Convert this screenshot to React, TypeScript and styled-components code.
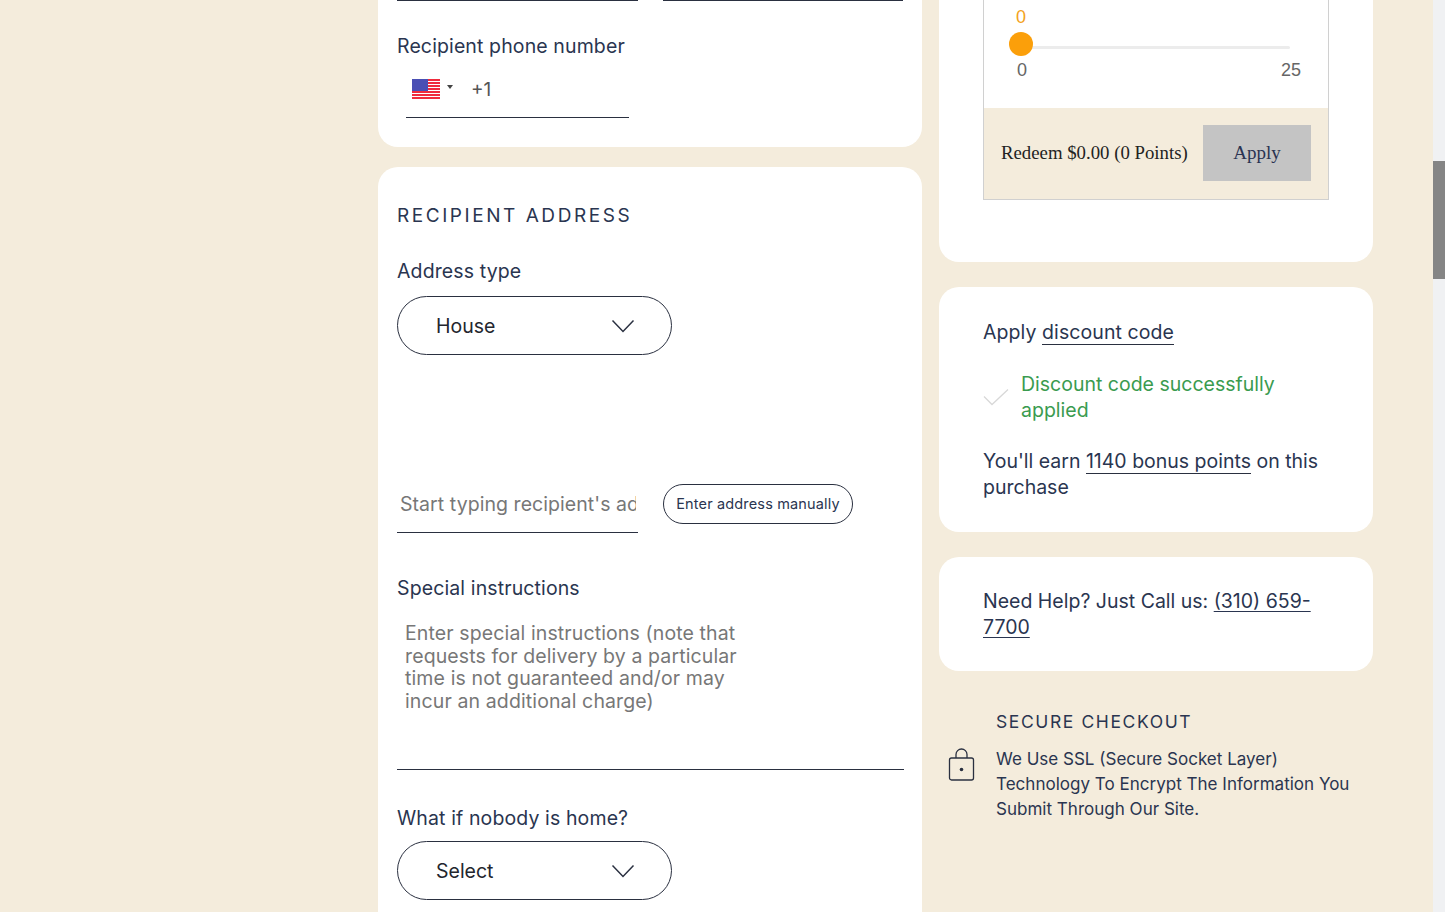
import React from 'react';
import styled, { createGlobalStyle } from 'styled-components';

const Global = createGlobalStyle`
  html, body { margin: 0; padding: 0; height: 912px; overflow: hidden; background: #f4ecdc; }
  * { box-sizing: border-box; }
  body { font-family: Inter, "Liberation Sans", sans-serif; color: #2a3550; }
`;

const Page = styled.div`
  display: flex;
  width: 1445px;
  height: 912px;
  overflow: hidden;
  background: #f4ecdc;
`;
const Content = styled.div`
  flex: 1;
  display: flex;
  align-items: flex-start;
  padding-left: 378px;
`;
const ScrollTrack = styled.div`
  width: 12px;
  height: 912px;
  background: #f0f1f3;
  padding-top: 161px;
`;
const ScrollThumb = styled.div`
  height: 118px;
  background: #858585;
`;
const LeftCol = styled.div`
  width: 544px;
  display: flex;
  flex-direction: column;
  gap: 20px;
`;
const RightCol = styled.div`
  width: 434px;
  margin-left: 17px;
  display: flex;
  flex-direction: column;
`;
const Card = styled.section<{ $open?: 'top' | 'bottom' }>`
  background: #fff;
  border-radius: ${p => (p.$open === 'top' ? '0 0 20px 20px' : p.$open === 'bottom' ? '20px 20px 0 0' : '20px')};
`;
const PhoneCard = styled(Card)`
  height: 147px;
  padding: 0 19px;
`;
const TopFields = styled.div`
  display: flex;
  gap: 25px;
`;
const TopLine = styled.div`
  width: 241px;
  height: 1px;
  background: #2a3040;
`;
const Label = styled.div`
  font-size: 19.5px;
  line-height: 26px;
  letter-spacing: 0.12px;
`;
const PhoneLabel = styled(Label)`
  margin-top: 32px;
`;
const PhoneField = styled.div`
  margin: 11px 0 0 9px;
  width: 223px;
  height: 48px;
  border-bottom: 1px solid #2a3040;
  display: flex;
  align-items: flex-start;
  padding: 9px 0 0 6px;
`;
const Caret = styled.span`
  width: 0;
  height: 0;
  margin: 6px 0 0 7px;
  border-left: 3px solid transparent;
  border-right: 3px solid transparent;
  border-top: 4px solid #444;
`;
const Dial = styled.span`
  margin: -1px 0 0 18px;
  font-size: 19px;
  line-height: 24px;
  color: #555;
`;
const AddressCard = styled(Card)`
  height: 760px;
  padding: 37px 19px 0;
`;
const Heading = styled.h2`
  margin: 0;
  font-size: 19px;
  line-height: 24px;
  font-weight: 400;
  letter-spacing: 2.55px;
`;
const TypeLabel = styled(Label)`
  margin-top: 30px;
`;
const Select = styled.div<{ $gap: number }>`
  width: 275px;
  height: 59px;
  border: 1px solid #2a3040;
  border-radius: 30px;
  margin-top: ${p => p.$gap}px;
  padding: 0 36px 0 38px;
  display: flex;
  align-items: center;
  justify-content: space-between;
  font-size: 19.5px;
  color: #23262e;
`;
const AddressRow = styled.div`
  display: flex;
  margin-top: 129px;
  gap: 25px;
  align-items: flex-start;
`;
const AddressInput = styled.div`
  width: 241px;
  height: 49px;
  padding: 8px 2px 0 3px;
  border-bottom: 1px solid #2a3040;
`;
const Placeholder = styled.div`
  width: 236px;
  font-size: 19.5px;
  line-height: 24px;
  color: #777;
  white-space: nowrap;
  overflow: hidden;
  letter-spacing: 0.06px;
`;
const Manual = styled.button`
  width: 190px;
  height: 40px;
  border: 1px solid #2a3040;
  border-radius: 20px;
  background: #fff;
  font: 400 14.5px Inter, sans-serif;
  letter-spacing: 0.15px;
  color: #2a3550;
  padding: 0 0 2px;
`;
const InstrLabel = styled(Label)`
  margin-top: 42px;
`;
const Textarea = styled.div`
  width: 507px;
  height: 159px;
  margin-top: 10px;
  padding: 11px 9px 0 8px;
  border-bottom: 1px solid #2a3040;
  font-size: 19.5px;
  line-height: 22.5px;
  color: #777;
  letter-spacing: 0.12px;
`;
const TextareaText = styled.div`
  width: 350px;
`;
const NobodyLabel = styled(Label)`
  margin-top: 35px;
`;
const RedeemCard = styled(Card)`
  height: 262px;
  padding: 0 44px;
`;
const RedeemBox = styled.div`
  width: 346px;
  height: 200px;
  border: 1px solid #d0d0d0;
  border-top: 0;
  display: flex;
  flex-direction: column;
`;
const SliderArea = styled.div`
  position: relative;
  height: 108px;
  font-family: "Liberation Sans", Arial, sans-serif;
  font-size: 18px;
`;
const SliderValue = styled.div`
  position: absolute;
  left: 32px;
  top: 7px;
  line-height: 20px;
  color: #f3a21c;
`;
const SliderTrack = styled.div`
  position: absolute;
  left: 26px;
  top: 46px;
  width: 280px;
  height: 3px;
  background: #ececec;
  border-radius: 2px;
`;
const SliderThumb = styled.div`
  position: absolute;
  left: 25px;
  top: 32px;
  width: 24px;
  height: 24px;
  border-radius: 50%;
  background: #fb9f0a;
`;
const SliderMark = styled.div<{ $left: number }>`
  position: absolute;
  left: ${p => p.$left}px;
  top: 60px;
  line-height: 20px;
  color: #666;
`;
const RedeemBar = styled.div`
  flex: 1;
  background: #f4ecdc;
  display: flex;
  align-items: flex-start;
  justify-content: space-between;
  padding: 17px 17px 0 17px;
  font-family: "Liberation Serif", "Times New Roman", serif;
`;
const RedeemText = styled.span`
  margin-top: 17px;
  font-size: 18.8px;
  line-height: 22px;
  color: #222;
`;
const ApplyBtn = styled.button`
  width: 108px;
  height: 56px;
  border: 0;
  background: #c4c4c4;
  font: 400 19px "Liberation Serif", serif;
  color: #2a3352;
  padding: 0;
`;
const DiscountCard = styled(Card)`
  margin-top: 25px;
  height: 245px;
  padding: 32px 44px 0;
  font-size: 19.5px;
  line-height: 26px;
`;
const DiscountTitle = styled.div`
  letter-spacing: 0.08px;
`;
const Link = styled.a`
  color: inherit;
  text-decoration: none;
  border-bottom: 1px solid #2a3040;
`;
const Success = styled.div`
  display: flex;
  align-items: center;
  margin: 26px 0 25px;
  color: #3a9b50;
`;
const CheckIcon = styled.svg`
  flex: none;
  margin-right: 12px;
`;
const HelpCard = styled(Card)`
  margin-top: 25px;
  height: 114px;
  padding: 31px 44px 0;
  font-size: 19.5px;
  line-height: 26px;
`;
const HelpLink = styled.a`
  color: inherit;
  text-decoration: underline;
  text-underline-offset: 3px;
  text-decoration-thickness: 1px;
`;
const Secure = styled.div`
  margin-top: 38px;
  padding: 0 20px 0 9px;
  display: flex;
  align-items: center;
`;
const LockIcon = styled.svg`
  flex: none;
`;
const SecureBody = styled.div`
  margin-left: 20px;
`;
const SecureTitle = styled.div`
  font-size: 17.5px;
  line-height: 26px;
  letter-spacing: 1.6px;
`;
const SecureText = styled.p`
  margin: 11px 0 0;
  font-size: 17.05px;
  line-height: 25px;
`;

export default function App() {
  return (
    <>
      <Global />
      <Page>
        <Content>
          <LeftCol>
            <PhoneCard $open="top">
              <TopFields>
                <TopLine />
                <TopLine />
              </TopFields>
              <PhoneLabel>Recipient phone number</PhoneLabel>
              <PhoneField>
                <svg width="28" height="20" viewBox="0 0 28 20">
                  <rect width="28" height="20" fill="#fff" />
                  {[0, 3, 6, 9, 12, 15, 18].map(y => (
                    <rect key={y} y={y} width="28" height="2" fill="#ef2b3d" />
                  ))}
                  <rect width="16" height="12" fill="#4a4fb4" />
                </svg>
                <Caret />
                <Dial>+1</Dial>
              </PhoneField>
            </PhoneCard>
            <AddressCard $open="bottom">
              <Heading>RECIPIENT ADDRESS</Heading>
              <TypeLabel>Address type</TypeLabel>
              <Select $gap={12}>
                House
                <svg width="24" height="14" viewBox="0 0 24 14" fill="none" stroke="#2a3040" strokeWidth="1.5">
                  <path d="M1.5 1.5 12 12.5 22.5 1.5" />
                </svg>
              </Select>
              <AddressRow>
                <AddressInput>
                  <Placeholder>Start typing recipient's address</Placeholder>
                </AddressInput>
                <Manual>Enter address manually</Manual>
              </AddressRow>
              <InstrLabel>Special instructions</InstrLabel>
              <Textarea>
                <TextareaText>
                  Enter special instructions (note that requests for delivery by a particular time is not guaranteed and/or may incur an additional charge)
                </TextareaText>
              </Textarea>
              <NobodyLabel>What if nobody is home?</NobodyLabel>
              <Select $gap={10}>
                Select
                <svg width="24" height="14" viewBox="0 0 24 14" fill="none" stroke="#2a3040" strokeWidth="1.5">
                  <path d="M1.5 1.5 12 12.5 22.5 1.5" />
                </svg>
              </Select>
            </AddressCard>
          </LeftCol>
          <RightCol>
            <RedeemCard $open="top">
              <RedeemBox>
                <SliderArea>
                  <SliderValue>0</SliderValue>
                  <SliderTrack />
                  <SliderThumb />
                  <SliderMark $left={33}>0</SliderMark>
                  <SliderMark $left={297}>25</SliderMark>
                </SliderArea>
                <RedeemBar>
                  <RedeemText>Redeem $0.00 (0 Points)</RedeemText>
                  <ApplyBtn>Apply</ApplyBtn>
                </RedeemBar>
              </RedeemBox>
            </RedeemCard>
            <DiscountCard>
              <DiscountTitle>
                Apply <Link>discount code</Link>
              </DiscountTitle>
              <Success>
                <CheckIcon width="26" height="18" viewBox="0 0 26 18" fill="none" stroke="#d8d8d8" strokeWidth="1.3">
                  <path d="M1 8.5 9 16.5 25 1.5" />
                </CheckIcon>
                <span>Discount code successfully applied</span>
              </Success>
              <div>
                You'll earn <Link>1140 bonus points</Link> on this purchase
              </div>
            </DiscountCard>
            <HelpCard>
              Need Help? Just Call us: <HelpLink>(310) 659-7700</HelpLink>
            </HelpCard>
            <Secure>
              <LockIcon width="28" height="34" viewBox="0 0 28 34" fill="none" stroke="#2a3040" strokeWidth="1.3">
                <rect x="1.5" y="10" width="24" height="22" rx="2" />
                <path d="M8 10V6.5a5.5 5.5 0 0 1 11 0V10" />
                <circle cx="13.5" cy="21.5" r="1.8" fill="#2a3040" stroke="none" />
              </LockIcon>
              <SecureBody>
                <SecureTitle>SECURE CHECKOUT</SecureTitle>
                <SecureText>We Use SSL (Secure Socket Layer) Technology To Encrypt The Information You Submit Through Our Site.</SecureText>
              </SecureBody>
            </Secure>
          </RightCol>
        </Content>
        <ScrollTrack>
          <ScrollThumb />
        </ScrollTrack>
      </Page>
    </>
  );
}
